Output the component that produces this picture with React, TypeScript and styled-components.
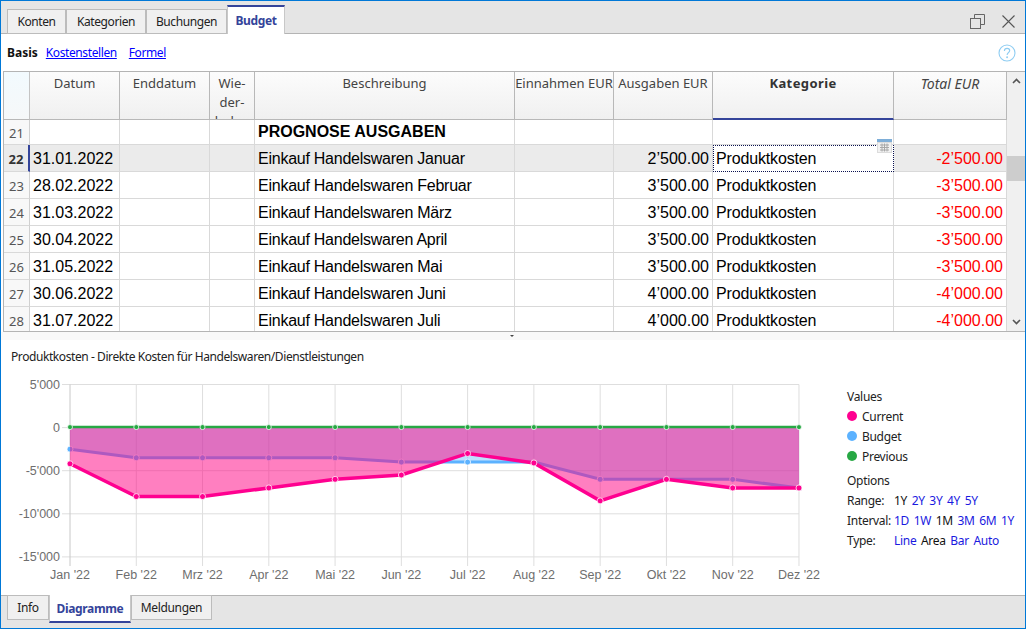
import styled, { createGlobalStyle } from "styled-components";

const UI_FONT = `"Noto Sans", "Open Sans", sans-serif`;
const CELL_FONT = `"Liberation Sans", Arial, sans-serif`;

const GlobalStyle = createGlobalStyle`
  html, body {
    margin: 0;
    padding: 0;
    background: #fff;
  }
  * {
    box-sizing: border-box;
  }
`;

const rows = [
  { nr: 22, date: "31.01.2022", text: "Einkauf Handelswaren Januar", out: "2’500.00", total: "-2’500.00" },
  { nr: 23, date: "28.02.2022", text: "Einkauf Handelswaren Februar", out: "3’500.00", total: "-3’500.00" },
  { nr: 24, date: "31.03.2022", text: "Einkauf Handelswaren März", out: "3’500.00", total: "-3’500.00" },
  { nr: 25, date: "30.04.2022", text: "Einkauf Handelswaren April", out: "3’500.00", total: "-3’500.00" },
  { nr: 26, date: "31.05.2022", text: "Einkauf Handelswaren Mai", out: "3’500.00", total: "-3’500.00" },
  { nr: 27, date: "30.06.2022", text: "Einkauf Handelswaren Juni", out: "4’000.00", total: "-4’000.00" },
  { nr: 28, date: "31.07.2022", text: "Einkauf Handelswaren Juli", out: "4’000.00", total: "-4’000.00" },
];

const months = ["Jan '22", "Feb '22", "Mrz '22", "Apr '22", "Mai '22", "Jun '22", "Jul '22", "Aug '22", "Sep '22", "Okt '22", "Nov '22", "Dez '22"];
const current = [-4200, -8000, -8000, -7000, -6000, -5500, -3000, -4100, -8500, -6000, -7000, -7000];
const budget = [-2500, -3500, -3500, -3500, -3500, -4000, -4000, -4000, -6000, -6000, -6000, -7000];
// sits a hair above the zero line, so the green stays clear of the fills
const previous = months.map(() => 60);
const ticks = [
  { v: 5000, label: "5'000" },
  { v: 0, label: "0" },
  { v: -5000, label: "-5'000" },
  { v: -10000, label: "-10'000" },
  { v: -15000, label: "-15'000" },
];

const toX = (i: number) => 69 + i * 66.27;
const toY = (v: number) => 55.6 - v * 0.00862;
const line = (data: number[]) => data.map((v, i) => `${toX(i)},${toY(v)}`).join(" ");
const area = (data: number[]) => `${toX(0)},${toY(0) + 0.5} ${line(data)} ${toX(11)},${toY(0) + 0.5}`;

function Dots({ data, color, r = 3 }: { data: number[]; color: string; r?: number }) {
  return (
    <>
      {data.map((v, i) => (
        <circle key={i} cx={toX(i)} cy={toY(v)} r={r} fill={color} stroke="#fff" strokeOpacity={0.75} strokeWidth={1} />
      ))}
    </>
  );
}

function Chart() {
  return (
    <ChartSvg width={846} height={224}>
      {ticks.map((t) => (
        <g key={t.v}>
          <line x1={61} x2={toX(11)} y1={toY(t.v)} y2={toY(t.v)} stroke="#dedede" />
          <text x={59} y={toY(t.v) + 4} textAnchor="end" fontSize={12.5} fill="#6e6e6e">
            {t.label}
          </text>
        </g>
      ))}
      {months.map((m, i) => (
        <g key={m}>
          <line x1={toX(i)} x2={toX(i)} y1={toY(5000)} y2={194} stroke={i === 0 ? "#c8c8c8" : "#dedede"} />
          <text x={toX(i)} y={207} textAnchor="middle" fontSize={12.5} fill="#6e6e6e">
            {m}
          </text>
        </g>
      ))}
      <polygon points={area(budget)} fill="rgba(92,178,255,0.4)" />
      <polyline points={line(budget)} fill="none" stroke="#5cb2ff" strokeWidth={3} />
      <Dots data={budget} color="#5cb2ff" />
      <polygon points={area(current)} fill="rgba(255,0,130,0.5)" />
      <polyline points={line(current)} fill="none" stroke="#ff0090" strokeWidth={3.5} />
      <Dots data={current} color="#ff0090" />
      <polyline points={line(previous)} fill="none" stroke="#27a844" strokeWidth={2.5} />
      <Dots data={previous} color="#27a844" r={2.5} />
    </ChartSvg>
  );
}

function RestoreIcon() {
  return (
    <svg width="15" height="15" viewBox="0 0 15 15" fill="none" stroke="#666" strokeWidth="1">
      <rect x="0.5" y="4.5" width="10" height="10" />
      <path d="M4.5 4.5V0.5H14.5V10.5H10.5" />
    </svg>
  );
}

function CloseIcon() {
  return (
    <svg width="13" height="13" viewBox="0 0 13 13" fill="none" stroke="#555" strokeWidth="1.1">
      <path d="M0.5 0.5L12.5 12.5M12.5 0.5L0.5 12.5" />
    </svg>
  );
}

function HelpIcon() {
  return (
    <svg width="18" height="18" viewBox="0 0 18 18" fill="none" stroke="#8fcdf2" strokeWidth="1.1">
      <circle cx="9" cy="9" r="8" />
      <path d="M6.4 7C6.4 5.4 7.6 4.4 9.1 4.4C10.6 4.4 11.7 5.4 11.7 6.7C11.7 8.4 9.1 8.7 9.1 11" />
      <circle cx="9.1" cy="13.3" r="0.4" />
    </svg>
  );
}

function CalendarIcon() {
  return (
    <svg width="15" height="14" viewBox="0 0 15 14">
      <rect x="0" y="0" width="15" height="14" fill="#dcdcdc" />
      <rect x="0" y="0" width="15" height="3" fill="#7eaed8" />
      <rect x="1" y="4" width="13" height="9" fill="#f2f2f2" />
      <path d="M3 6H12M3 8.5H12M3 11H12M5 4.5V12.5M7.5 4.5V12.5M10 4.5V12.5" stroke="#a8a8a8" strokeWidth="1" fill="none" />
    </svg>
  );
}

function Chevron({ down }: { down?: boolean }) {
  return (
    <svg width="9" height="6" viewBox="0 0 9 6" fill="none" stroke="#555" strokeWidth="1.6">
      <path d={down ? "M1 1L4.5 4.5L8 1" : "M1 5L4.5 1.5L8 5"} />
    </svg>
  );
}

export default function App() {
  return (
    <Window>
      <GlobalStyle />
      <TopBar>
        <TabGroup>
          <Tab $width={59}>Konten</Tab>
          <Tab $width={80}>Kategorien</Tab>
          <Tab $width={81}>Buchungen</Tab>
          <ActiveTab $width={58}>Budget</ActiveTab>
        </TabGroup>
        <WindowButtons>
          <RestoreIcon />
          <CloseIcon />
        </WindowButtons>
      </TopBar>

      <ViewBar>
        <ViewActive>Basis</ViewActive>
        <ViewLink>Kostenstellen</ViewLink>
        <ViewLink>Formel</ViewLink>
        <HelpSlot>
          <HelpIcon />
        </HelpSlot>
      </ViewBar>

      <TableFrame>
        <TableBody>
          <HeadRow>
            <NumHead />
            <HeadCell>Datum</HeadCell>
            <HeadCell>Enddatum</HeadCell>
            <HeadCell>
              Wie-
              <br />
              der-
              <br />
              holen
            </HeadCell>
            <HeadCell>Beschreibung</HeadCell>
            <HeadCell>Einnahmen EUR</HeadCell>
            <HeadCell>Ausgaben EUR</HeadCell>
            <KategorieHead>Kategorie</KategorieHead>
            <TotalHead>Total EUR</TotalHead>
          </HeadRow>
          <DataRow $height={25}>
            <NumCell>21</NumCell>
            <Cell />
            <Cell />
            <Cell />
            <Cell $bold>PROGNOSE AUSGABEN</Cell>
            <Cell />
            <Cell />
            <Cell />
            <Cell />
          </DataRow>
          {rows.map((r, i) => (
            <DataRow key={r.nr} $height={27} $selected={i === 0}>
              <NumCell $selected={i === 0}>{r.nr}</NumCell>
              <Cell>{r.date}</Cell>
              <Cell />
              <Cell />
              <Cell $tracking={-0.25}>{r.text}</Cell>
              <Cell />
              <Cell $right>{r.out}</Cell>
              {i === 0 ? (
                <EditCell $tracking={-0.15}>
                  Produktkosten
                  <CalendarSlot>
                    <CalendarIcon />
                  </CalendarSlot>
                </EditCell>
              ) : (
                <Cell $tracking={-0.15}>Produktkosten</Cell>
              )}
              <Cell $right $red>
                {r.total}
              </Cell>
            </DataRow>
          ))}
        </TableBody>
        <ScrollBar>
          <ScrollButton>
            <Chevron />
          </ScrollButton>
          <ScrollThumb />
          <ScrollButton>
            <Chevron down />
          </ScrollButton>
        </ScrollBar>
      </TableFrame>

      <Splitter>
        <SplitterMark />
      </Splitter>

      <ChartPanel>
        <ChartTitle>Produktkosten - Direkte Kosten für Handelswaren/Dienstleistungen</ChartTitle>
        <ChartRow>
          <Chart />
          <Legend>
            <LegendRow>Values</LegendRow>
            <LegendRow>
              <LegendDot $color="#ff0090" />
              Current
            </LegendRow>
            <LegendRow>
              <LegendDot $color="#5cb2ff" />
              Budget
            </LegendRow>
            <LegendRow>
              <LegendDot $color="#27a844" />
              Previous
            </LegendRow>
            <OptionsTitle>Options</OptionsTitle>
            <LegendRow>
              <OptionLabel>Range:</OptionLabel>
              <OptionItem $active>1Y</OptionItem>
              <OptionItem>2Y</OptionItem>
              <OptionItem>3Y</OptionItem>
              <OptionItem>4Y</OptionItem>
              <OptionItem>5Y</OptionItem>
            </LegendRow>
            <LegendRow>
              <OptionLabel>Interval:</OptionLabel>
              <OptionItem>1D</OptionItem>
              <OptionItem>1W</OptionItem>
              <OptionItem $active>1M</OptionItem>
              <OptionItem>3M</OptionItem>
              <OptionItem>6M</OptionItem>
              <OptionItem>1Y</OptionItem>
            </LegendRow>
            <LegendRow>
              <OptionLabel>Type:</OptionLabel>
              <OptionItem>Line</OptionItem>
              <OptionItem $active>Area</OptionItem>
              <OptionItem>Bar</OptionItem>
              <OptionItem>Auto</OptionItem>
            </LegendRow>
          </Legend>
        </ChartRow>
      </ChartPanel>

      <BottomBar>
        <BottomTab $width={42}>Info</BottomTab>
        <BottomActiveTab $width={82}>Diagramme</BottomActiveTab>
        <BottomTab $width={81}>Meldungen</BottomTab>
      </BottomBar>
    </Window>
  );
}

const Window = styled.div`
  width: 1026px;
  height: 629px;
  border: 1px solid #0078d7;
  display: flex;
  flex-direction: column;
  overflow: hidden;
  background: #fff;
  font-family: ${UI_FONT};
`;

const TopBar = styled.div`
  height: 33px;
  flex: none;
  display: flex;
  align-items: flex-end;
  justify-content: space-between;
  background: #e5e5e5;
  border-bottom: 1px solid #b4b4b4;
  padding-left: 6px;
`;

const TabGroup = styled.div`
  display: flex;
  align-items: flex-end;
`;

const Tab = styled.div<{ $width: number }>`
  width: ${(p) => p.$width}px;
  height: 25px;
  margin-bottom: -1px;
  display: flex;
  align-items: center;
  justify-content: center;
  background: #f0f0f0;
  border: 1px solid #bcbcbc;
  font-size: 12px;
  letter-spacing: -0.4px;
  color: #222;
`;

const ActiveTab = styled(Tab)`
  height: 29px;
  background: #fff;
  border: 1px solid #c8c8c8;
  border-top: 2px solid #34449a;
  border-bottom: none;
  font-weight: 700;
  color: #34449a;
`;

const WindowButtons = styled.div`
  display: flex;
  align-items: center;
  gap: 17px;
  height: 100%;
  padding: 8px 10px 0 0;
`;

const ViewBar = styled.div`
  height: 37px;
  flex: none;
  display: flex;
  align-items: center;
  padding: 0 9px 0 6px;
  font-size: 12px;
  background: #fff;
`;

const ViewActive = styled.span`
  font-weight: 700;
  color: #111;
  margin-right: 8px;
`;

const ViewLink = styled.span`
  color: #0000ff;
  text-decoration: underline;
  letter-spacing: -0.4px;
  margin-right: 12px;
`;

const HelpSlot = styled.div`
  margin-left: auto;
  display: flex;
`;

const TableFrame = styled.div`
  height: 261px;
  flex: none;
  margin-left: 2px;
  display: flex;
  border: 1px solid #b4b4b4;
  border-right: none;
  overflow: hidden;
`;

const TableBody = styled.div`
  width: 1003px;
  flex: none;
  overflow: hidden;
`;

const COLUMNS = "26px 90px 90px 45px 260px 99px 99px 181px 113px";

const HeadRow = styled.div`
  display: grid;
  grid-template-columns: ${COLUMNS};
  height: 48px;
  overflow: hidden;
`;

const HeadCell = styled.div`
  height: 48px;
  overflow: hidden;
  padding: 2px 0 0;
  text-align: center;
  white-space: nowrap;
  font-size: 13px;
  line-height: 19px;
  color: #444;
  background: linear-gradient(#fcfcfc, #f0f0f0);
  border-right: 1px solid #b8b8b8;
  border-bottom: 1px solid #b8b8b8;
`;

const NumHead = styled(HeadCell)`
  background: linear-gradient(#f2fafe, #f6f8f9);
  border-right: 1px solid #c4c4c4;
`;

const KategorieHead = styled(HeadCell)`
  font-weight: 700;
  letter-spacing: 0.4px;
  color: #333;
  border-bottom: 2px solid #34449a;
`;

const TotalHead = styled(HeadCell)`
  font-size: 14px;
  font-style: italic;
`;

const DataRow = styled.div<{ $height: number; $selected?: boolean }>`
  display: grid;
  grid-template-columns: ${COLUMNS};
  height: ${(p) => p.$height}px;
  background: ${(p) => (p.$selected ? "#ebebeb" : "#fff")};
`;

const Cell = styled.div<{ $right?: boolean; $red?: boolean; $bold?: boolean; $tracking?: number }>`
  display: flex;
  align-items: center;
  justify-content: ${(p) => (p.$right ? "flex-end" : "flex-start")};
  padding: ${(p) => (p.$bold ? "0" : "2px")} 3px 0;
  white-space: nowrap;
  font-family: ${CELL_FONT};
  font-size: 16px;
  font-weight: ${(p) => (p.$bold ? 700 : 400)};
  letter-spacing: ${(p) => p.$tracking ?? 0}px;
  color: ${(p) => (p.$red ? "#ff0000" : "#000")};
  border-right: 1px solid #d9d9d9;
  border-bottom: 1px solid #d9d9d9;
`;

const NumCell = styled.div<{ $selected?: boolean }>`
  display: flex;
  align-items: center;
  justify-content: center;
  padding-top: 1px;
  font-size: 13px;
  font-weight: ${(p) => (p.$selected ? 700 : 400)};
  color: ${(p) => (p.$selected ? "#333" : "#555")};
  background: ${(p) => (p.$selected ? "#ebebeb" : "#f8f8f8")};
  border-right: ${(p) => (p.$selected ? "2px solid #34449a" : "1px solid #d0d0d0")};
  border-bottom: 1px solid #d9d9d9;
`;

const EditCell = styled(Cell)`
  position: relative;
  background: #fff;
  border: 1px dotted #0a1250;
  padding: 1px 2px 0;
`;

const CalendarSlot = styled.div`
  position: absolute;
  right: 1px;
  top: -7px;
  display: flex;
`;

const ScrollBar = styled.div`
  width: 18px;
  flex: none;
  display: flex;
  flex-direction: column;
  background: #f0f0f0;
`;

const ScrollButton = styled.div`
  height: 18px;
  display: flex;
  align-items: center;
  justify-content: center;
  &:last-child {
    margin-top: auto;
  }
`;

const ScrollThumb = styled.div`
  height: 25px;
  margin-top: 66px;
  background: #cdcdcd;
`;

const Splitter = styled.div`
  height: 8px;
  flex: none;
  display: flex;
  justify-content: center;
  align-items: center;
  background: #f9f9f9;
`;

const SplitterMark = styled.div`
  width: 0;
  height: 0;
  margin-right: 2px;
  border-left: 2px solid transparent;
  border-right: 2px solid transparent;
  border-top: 2px solid #444;
`;

const ChartPanel = styled.div`
  flex: 1;
  min-height: 0;
  display: flex;
  flex-direction: column;
  background: #fff;
`;

const ChartTitle = styled.div`
  height: 32px;
  flex: none;
  display: flex;
  align-items: center;
  padding-left: 10px;
  font-size: 12px;
  letter-spacing: -0.42px;
  color: #222;
`;

const ChartRow = styled.div`
  display: flex;
  flex: 1;
  min-height: 0;
`;

const ChartSvg = styled.svg`
  flex: none;
  display: block;
  font-family: ${CELL_FONT};
`;

const Legend = styled.div`
  padding-top: 14px;
  display: flex;
  flex-direction: column;
  font-size: 12px;
  letter-spacing: -0.3px;
  color: #222;
`;

const LegendRow = styled.div`
  height: 20px;
  display: flex;
  align-items: center;
  white-space: nowrap;
`;

const OptionsTitle = styled(LegendRow)`
  margin-top: 4px;
`;

const LegendDot = styled.span<{ $color: string }>`
  width: 10px;
  height: 10px;
  border-radius: 50%;
  margin-right: 5px;
  background: ${(p) => p.$color};
`;

const OptionLabel = styled.span`
  width: 47px;
`;

const OptionItem = styled.span<{ $active?: boolean }>`
  margin-right: 4.6px;
  color: ${(p) => (p.$active ? "#111" : "#1a1ae0")};
`;

const BottomBar = styled.div`
  height: 33px;
  flex: none;
  display: flex;
  align-items: flex-start;
  padding-left: 6px;
  background: #e5e5e5;
  border-top: 1px solid #b4b4b4;
`;

const BottomTab = styled.div<{ $width: number }>`
  width: ${(p) => p.$width}px;
  height: 25px;
  margin-top: -1px;
  display: flex;
  align-items: center;
  justify-content: center;
  background: #f0f0f0;
  border: 1px solid #bcbcbc;
  font-size: 12px;
  letter-spacing: -0.35px;
  color: #222;
`;

const BottomActiveTab = styled(BottomTab)`
  height: 28px;
  background: #fff;
  border: 1px solid #c8c8c8;
  border-top: none;
  border-bottom: 2px solid #34449a;
  font-weight: 700;
  color: #34449a;
`;
